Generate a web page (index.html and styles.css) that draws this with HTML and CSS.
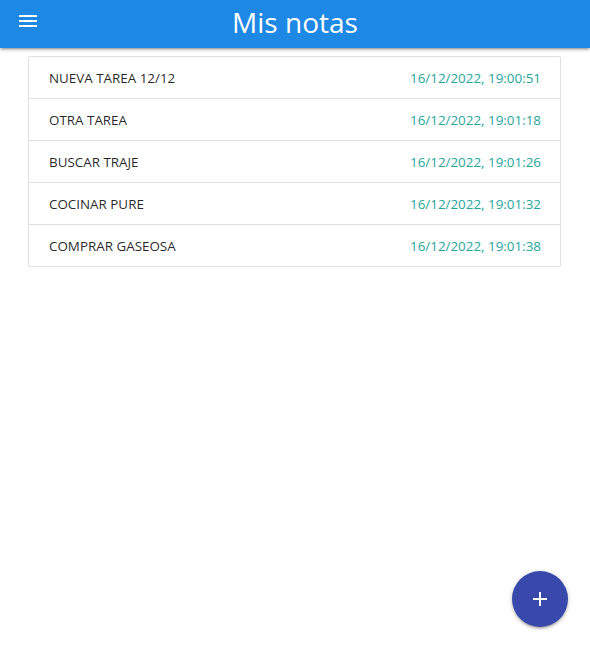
FILE: index.html
```html
<!DOCTYPE html>
<html lang="es">
<head>
<meta charset="utf-8">
<title>Mis notas</title>
<link rel="stylesheet" href="styles.css">
</head>
<body>
<header class="navbar">
  <button class="menu-btn" aria-label="Menú">
    <svg width="24" height="24" viewBox="0 0 24 24"><path d="M3 18h18v-2H3v2zm0-5h18v-2H3v2zm0-7v2h18V6H3z" fill="#fff"/></svg>
  </button>
  <h1 class="brand">Mis notas</h1>
</header>
<main class="container">
  <ul class="collection">
    <li class="item"><span class="title">NUEVA TAREA 12/12</span><span class="date">16/12/2022, 19:00:51</span></li>
    <li class="item"><span class="title">OTRA TAREA</span><span class="date">16/12/2022, 19:01:18</span></li>
    <li class="item"><span class="title">BUSCAR TRAJE</span><span class="date">16/12/2022, 19:01:26</span></li>
    <li class="item"><span class="title">COCINAR PURE</span><span class="date">16/12/2022, 19:01:32</span></li>
    <li class="item"><span class="title">COMPRAR GASEOSA</span><span class="date">16/12/2022, 19:01:38</span></li>
  </ul>
</main>
<button class="fab" aria-label="Agregar">
  <svg width="24" height="24" viewBox="0 0 24 24"><path d="M19 13h-6v6h-2v-6H5v-2h6V5h2v6h6v2z" fill="#fff"/></svg>
</button>
</body>
</html>
```
FILE: styles.css
```css
* { box-sizing: border-box; }
html, body { margin: 0; padding: 0; }
body {
  font-family: "Open Sans", "Noto Sans", sans-serif;
  font-size: 13.4px;
  color: rgba(0,0,0,0.87);
  background: #fff;
  width: 590px;
  height: 648px;
  overflow: hidden;
  position: relative;
}
.navbar {
  height: 48px;
  background: #1e88e5;
  box-shadow: 0 2px 2px 0 rgba(0,0,0,0.14), 0 3px 1px -2px rgba(0,0,0,0.12), 0 1px 5px 0 rgba(0,0,0,0.2);
  display: flex;
  align-items: center;
  justify-content: center;
  position: relative;
}
.menu-btn {
  position: absolute;
  left: 16px;
  top: 9px;
  width: 24px;
  height: 24px;
  padding: 0;
  border: 0;
  background: none;
  display: flex;
}
.brand {
  margin: 0;
  font-family: "Open Sans", "Noto Sans", sans-serif;
  font-weight: 400;
  font-size: 28px;
  line-height: 48px;
  color: #fff;
  position: relative;
  top: -2px;
}
.container {
  margin: 8px 29px 0 28px;
}
.collection {
  list-style: none;
  margin: 0;
  padding: 0;
  border: 1px solid #e0e0e0;
  border-radius: 2px;
}
.item {
  display: flex;
  justify-content: space-between;
  align-items: center;
  padding: 11px 19px 9px 20px;
  line-height: 21px;
  border-bottom: 1px solid #e0e0e0;
}
.item:last-child { border-bottom: 0; }
.date { color: #26a69a; }
.fab {
  position: absolute;
  left: 512px;
  top: 571px;
  width: 56px;
  height: 56px;
  border-radius: 50%;
  border: 0;
  padding: 0;
  background: #3949ab;
  display: flex;
  align-items: center;
  justify-content: center;
  box-shadow: 0 2px 2px 0 rgba(0,0,0,0.14), 0 3px 1px -2px rgba(0,0,0,0.12), 0 1px 5px 0 rgba(0,0,0,0.2);
}
```
